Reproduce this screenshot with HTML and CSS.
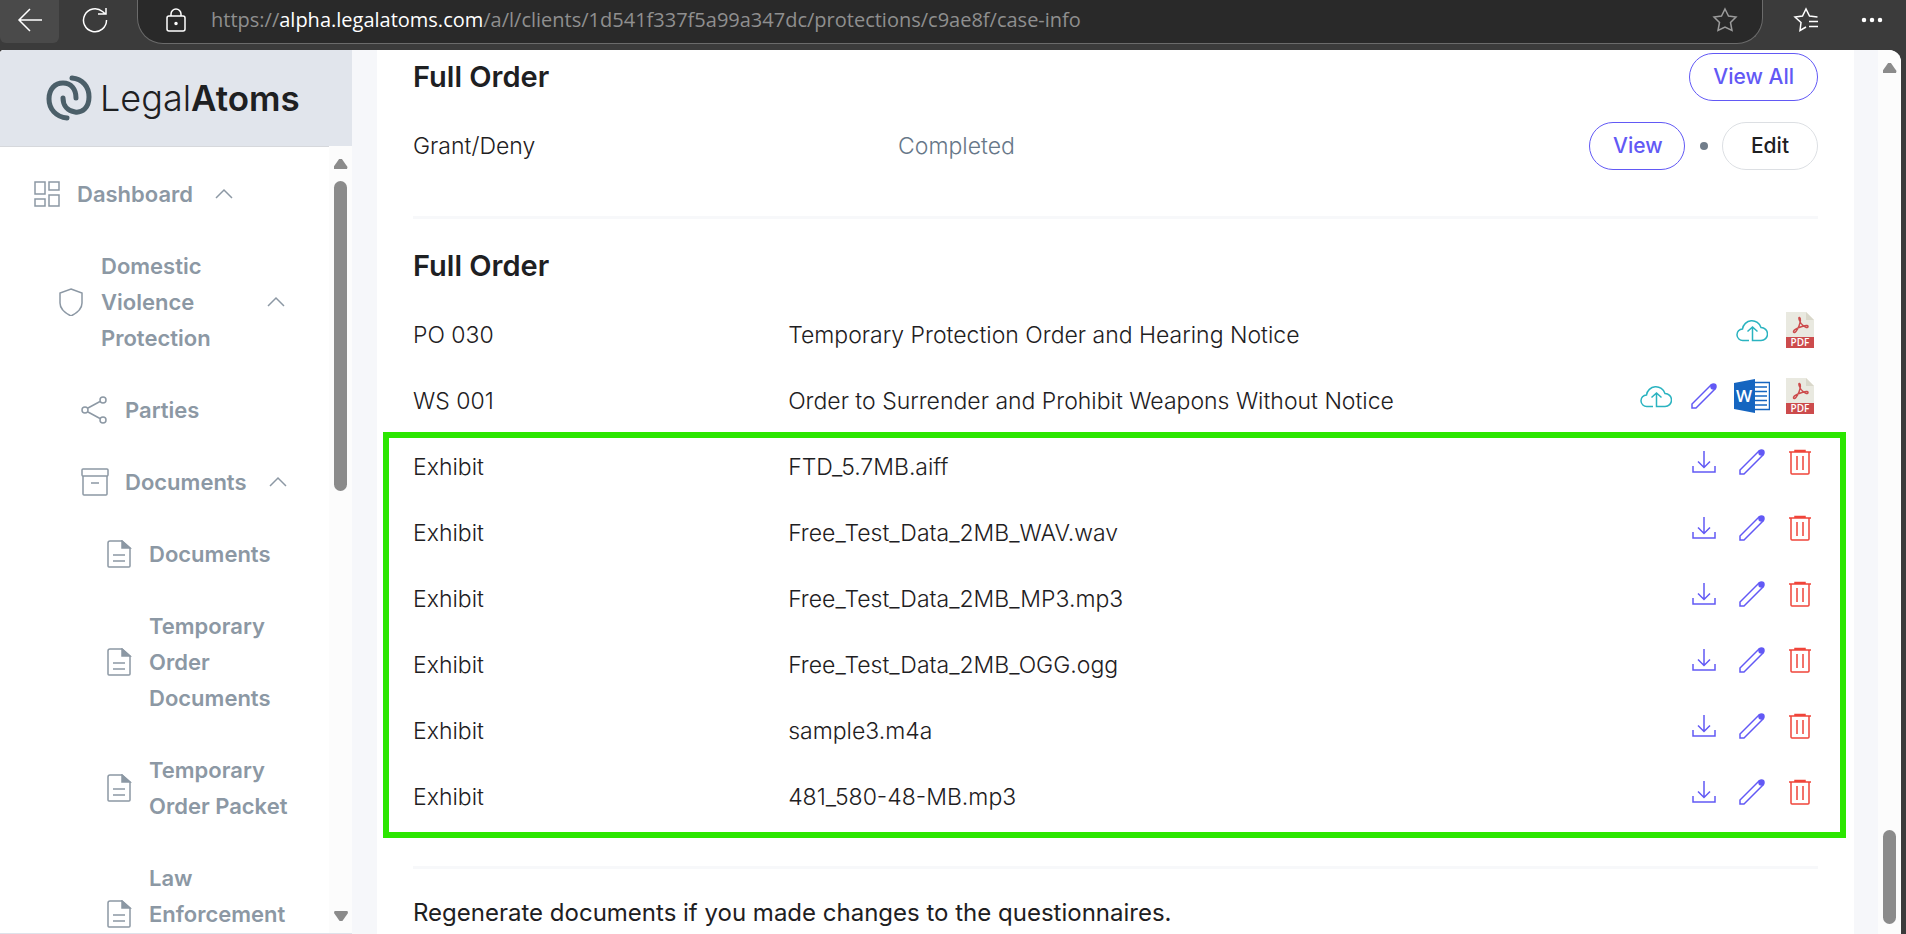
FILE: index.html
```html
<!DOCTYPE html>
<html lang="en">
<head>
  <meta charset="UTF-8" />
  <meta name="viewport" content="width=device-width, initial-scale=1" />
  <title>LegalAtoms - Case Info</title>
  <link rel="stylesheet" href="styles.css">
</head>
<body>
  <!-- icons -->
  <svg class="sprite" aria-hidden="true">
    <symbol id="i-chevron" viewBox="0 0 18 18"><path d="M1 13l8-8 8 8"/></symbol>
    <symbol id="i-file" viewBox="0 0 28 28"><path d="M17 1H5a2 2 0 0 0-2 2v23a1 1 0 0 0 1 1h20a1 1 0 0 0 1-1V8z"/><path class="fill" d="M17 1v7h8z"/><path d="M8 15h12M8 21h12"/></symbol>
    <symbol id="i-cloud" viewBox="0 0 32 32"><path d="M13 26.500H7a5.500 5.500 0 0 1-.5-11.500 9.500 9.500 0 0 1 18.500-1.500 6.500 6.500 0 0 1 0 13h-8.500V13.500M11.500 17.500l5-4.500 5 4.500"/></symbol>
    <symbol id="i-pencil" viewBox="0 0 28 28"><path d="M2 26v-4L21 3l4 4L6 26z"/><circle class="fill" cx="23.500" cy="4.500" r="2.500"/></symbol>
    <symbol id="i-download" viewBox="0 0 28 28"><path d="M14 3v16M8 13.500l6 6 6-6M3 18v6h22v-6"/></symbol>
    <symbol id="i-trash" viewBox="0 0 28 28"><path d="M3 4h22M9 4V2.500h10V4M5 4v21q0 1 1 1h16q1 0 1-1V4M11 8v14M17 8v14"/></symbol>
    <symbol id="i-pdf" viewBox="0 0 28 36">
      <path fill="#e9e9e0" d="M0 0h20l8 8v17H0z"/><path fill="#d9d7ca" d="M20 0v8h8z"/>
      <path fill="none" stroke="#cc4b4c" stroke-width="1.500" d="M7.500 20c1 2 4-2 5.500-6s2-8 .5-8.500 0 5 3 7.500 5.500 3.500 5.500 1.500-5.500-.5-9 1-6 3-5.500 4.500z"/>
      <path fill="#cc4b4c" d="M0 25h28v11H0z"/>
      <text x="14" y="34" text-anchor="middle" class="pdf-label">PDF</text>
    </symbol>
    <symbol id="i-word" viewBox="0 0 36 36">
      <path fill="#fff" stroke="#1565c0" d="M20 4.500h15.500v27H20z"/>
      <path stroke="#1565c0" stroke-width="1.500" d="M20 9h13M20 13.500h13M20 18h13M20 22.500h13M20 27h13"/>
      <path fill="#1565c0" d="M0 5l21-4v34L0 31z"/>
      <text x="10" y="24" text-anchor="middle" class="word-label">W</text>
    </symbol>
  </svg>

  <header class="browser">
    <button class="nav-btn active" aria-label="Back"><svg width="26" height="26" viewBox="0 0 26 26"><path d="M25 13H2M13 2 2 13l11 11"/></svg></button>
    <button class="nav-btn" aria-label="Reload"><svg width="26" height="26" viewBox="0 0 26 26"><path d="M24.500 13a11.500 11.500 0 1 1-4-8.500l3 2.500M24 1v6h-8"/></svg></button>
    <div class="address">
      <svg width="20" height="24" viewBox="0 0 20 24"><rect x="1" y="8" width="18" height="15" rx="2"/><path d="M5 8V6a5 5 0 0 1 10 0v2"/><circle class="fill" cx="10" cy="15.500" r="1"/></svg>
      <span class="url">https://<b>alpha.legalatoms.com</b>/a/l/clients/1d541f337f5a99a347dc/protections/c9ae8f/case-info</span>
      <svg class="star" width="26" height="26" viewBox="0 0 26 26"><path d="M13 2l3.500 7 7.500 1-5.500 5.500 1.500 8L13 20l-7 3.500 1.500-8L2 10l7.500-1z"/></svg>
    </div>
    <button class="tool-btn" aria-label="Favorites"><svg width="26" height="26" viewBox="0 0 26 26"><path d="M13 20l-6 3.500 1-8L2 10l7.500-1L13 2l3.500 7 8 1M16 14.500h9M16 19.500h9"/></svg></button>
    <button class="tool-btn" aria-label="Settings and more"><svg width="22" height="6" viewBox="0 0 22 6"><g class="fill"><circle cx="3" cy="3" r="1.500"/><circle cx="11" cy="3" r="1.500"/><circle cx="19" cy="3" r="1.500"/></g></svg></button>
  </header>

  <div class="page">
    <aside class="sidebar">
      <a class="logo" href="#">
        <svg width="46" height="46" viewBox="0 0 46 46"><path d="M26 3c10 1 17 8 17 19s-7 16-14 15-12-6-12-14"/><path d="M21 43C10 42 3 34 3 24S9 8 17 8s13 6 13 15"/></svg>
        <span>Legal<b>Atoms</b></span>
      </a>
      <div class="sidebar-body">
        <nav>
          <a class="item" href="#"><svg class="icon" viewBox="0 0 28 28"><path d="M2 2h10v12H2zM16 2h10v8H16zM2 19h10v7H2zM16 15h10v11H16z"/></svg><span>Dashboard</span><svg class="chevron"><use href="#i-chevron"/></svg></a>
          <a class="item l1" href="#"><svg class="icon" viewBox="0 0 28 28"><path d="M14 1l11 4v10c0 6-5 10-11 13C8 25 3 21 3 15V5z"/></svg><span>Domestic Violence Protection</span><svg class="chevron"><use href="#i-chevron"/></svg></a>
          <a class="item l2" href="#"><svg class="icon" viewBox="0 0 28 28"><circle cx="4" cy="14" r="3"/><circle cx="22" cy="4" r="3"/><circle cx="22" cy="24" r="3"/><path d="M7 12l12-6.500M7 16l12 6.500"/></svg><span>Parties</span></a>
          <a class="item l2" href="#"><svg class="icon" viewBox="0 0 28 28"><rect x="1" y="1" width="26" height="7" rx="1"/><path d="M2 8v18q0 1 1 1h22q1 0 1-1V8M10 15h8"/></svg><span>Documents</span><svg class="chevron"><use href="#i-chevron"/></svg></a>
          <a class="item l3" href="#"><svg class="icon"><use href="#i-file"/></svg><span>Documents</span></a>
          <a class="item l3" href="#"><svg class="icon"><use href="#i-file"/></svg><span>Temporary Order Documents</span></a>
          <a class="item l3" href="#"><svg class="icon"><use href="#i-file"/></svg><span>Temporary Order Packet</span></a>
          <a class="item l3" href="#"><svg class="icon"><use href="#i-file"/></svg><span>Law Enforcement Documents</span></a>
        </nav>
        <div class="scrollbar">
          <i class="up"></i><i class="thumb side-thumb"></i><i class="side-rest"></i><i class="down"></i>
        </div>
      </div>
    </aside>

    <main>
      <section class="card">
        <div class="row">
          <h2>Full Order</h2>
          <button class="btn primary">View All</button>
        </div>
        <div class="row status-row">
          <span>Grant/Deny</span>
          <span class="status">Completed</span>
          <button class="btn primary">View</button>
          <i class="dot"></i>
          <button class="btn">Edit</button>
        </div>
        <hr>
        <h2>Full Order</h2>
        <div class="files">
          <table>
            <tbody>
              <tr><td>PO 030</td><td>Temporary Protection Order and Hearing Notice</td><td><div class="actions">
                <button class="upload" aria-label="Upload"><svg><use href="#i-cloud"/></svg></button>
                <button class="doc" aria-label="PDF"><svg><use href="#i-pdf"/></svg></button></div></td></tr>
              <tr><td>WS 001</td><td>Order to Surrender and Prohibit Weapons Without Notice</td><td><div class="actions">
                <button class="upload" aria-label="Upload"><svg><use href="#i-cloud"/></svg></button>
                <button class="edit" aria-label="Edit"><svg><use href="#i-pencil"/></svg></button>
                <button class="doc" aria-label="Word"><svg><use href="#i-word"/></svg></button>
                <button class="doc" aria-label="PDF"><svg><use href="#i-pdf"/></svg></button></div></td></tr>
              <tr><td>Exhibit</td><td>FTD_5.7MB.aiff</td><td><div class="actions">
                <button class="edit" aria-label="Download"><svg><use href="#i-download"/></svg></button>
                <button class="edit" aria-label="Edit"><svg><use href="#i-pencil"/></svg></button>
                <button class="delete" aria-label="Delete"><svg><use href="#i-trash"/></svg></button></div></td></tr>
              <tr><td>Exhibit</td><td>Free_Test_Data_2MB_WAV.wav</td><td><div class="actions">
                <button class="edit" aria-label="Download"><svg><use href="#i-download"/></svg></button>
                <button class="edit" aria-label="Edit"><svg><use href="#i-pencil"/></svg></button>
                <button class="delete" aria-label="Delete"><svg><use href="#i-trash"/></svg></button></div></td></tr>
              <tr><td>Exhibit</td><td>Free_Test_Data_2MB_MP3.mp3</td><td><div class="actions">
                <button class="edit" aria-label="Download"><svg><use href="#i-download"/></svg></button>
                <button class="edit" aria-label="Edit"><svg><use href="#i-pencil"/></svg></button>
                <button class="delete" aria-label="Delete"><svg><use href="#i-trash"/></svg></button></div></td></tr>
              <tr><td>Exhibit</td><td>Free_Test_Data_2MB_OGG.ogg</td><td><div class="actions">
                <button class="edit" aria-label="Download"><svg><use href="#i-download"/></svg></button>
                <button class="edit" aria-label="Edit"><svg><use href="#i-pencil"/></svg></button>
                <button class="delete" aria-label="Delete"><svg><use href="#i-trash"/></svg></button></div></td></tr>
              <tr><td>Exhibit</td><td>sample3.m4a</td><td><div class="actions">
                <button class="edit" aria-label="Download"><svg><use href="#i-download"/></svg></button>
                <button class="edit" aria-label="Edit"><svg><use href="#i-pencil"/></svg></button>
                <button class="delete" aria-label="Delete"><svg><use href="#i-trash"/></svg></button></div></td></tr>
              <tr><td>Exhibit</td><td>481_580-48-MB.mp3</td><td><div class="actions">
                <button class="edit" aria-label="Download"><svg><use href="#i-download"/></svg></button>
                <button class="edit" aria-label="Edit"><svg><use href="#i-pencil"/></svg></button>
                <button class="delete" aria-label="Delete"><svg><use href="#i-trash"/></svg></button></div></td></tr>
            </tbody>
          </table>
          <div class="marker"></div>
        </div>
        <hr class="after-files">
        <p>Regenerate documents if you made changes to the questionnaires.</p>
      </section>
      <div class="scrollbar page-scroll">
        <i class="up"></i><i class="main-rest"></i><i class="thumb main-thumb"></i>
      </div>
    </main>
  </div>
</body>
</html>
```

FILE: styles.css
```css
* {
  box-sizing: border-box;
}
body {
  margin: 0;
  height: 100vh;
  overflow: hidden;
  display: flex;
  flex-direction: column;
  background: #3b3b3b;
  color: #1e2022;
  font: 24px/36px Inter, sans-serif;
}
a {
  color: inherit;
  text-decoration: none;
}
button {
  font: inherit;
  color: inherit;
  border: 0;
  background: none;
  padding: 0;
}
svg {
  display: block;
  flex: none;
  fill: none;
  stroke: currentColor;
  stroke-width: 1.5;
}
.fill {
  fill: currentColor;
}
.sprite {
  display: none;
}

/* browser bar */
.browser {
  flex: none;
  height: 50px;
  display: flex;
  align-items: flex-start;
  color: #fff;
}
.nav-btn {
  width: 59px;
  height: 43px;
  padding-bottom: 3px;
  display: flex;
  align-items: center;
  justify-content: center;
  border-radius: 0 0 6px 6px;
}
.nav-btn + .nav-btn {
  margin-left: 6px;
}
.nav-btn.active {
  background: #4a4a4a;
}
.address {
  flex: 1;
  height: 44px;
  margin-left: 13px;
  padding: 0 24px 4px 28px;
  display: flex;
  align-items: center;
  background: #292929;
  border: 1px solid #6b6b6b;
  border-top: 0;
  border-radius: 0 0 26px 26px;
}
.url {
  flex: 1;
  margin-left: 25px;
  font: 20px/30px "Open Sans", "Noto Sans", sans-serif;
  color: #8f8f8f;
}
.url b {
  font-weight: 400;
  color: #fff;
}
.star {
  color: #9b9b9b;
}
.tool-btn {
  width: 66px;
  height: 40px;
  display: flex;
  align-items: center;
  justify-content: center;
}
.tool-btn:nth-last-child(2) {
  margin-left: 10px;
}
.tool-btn:last-child {
  margin-right: 1px;
}

.page {
  flex: 1;
  min-height: 0;
  display: flex;
  margin-right: 5px;
  background: #f6f7fa;
  border-radius: 4px 12px 0 0;
  overflow: hidden;
}

/* sidebar */
.sidebar {
  width: 352px;
  flex: none;
  display: flex;
  flex-direction: column;
  background: #fff;
  border-bottom: 1px solid #dfe2ea;
}
.logo {
  flex: none;
  height: 96px;
  padding-left: 46px;
  display: flex;
  align-items: center;
  gap: 8px;
  background: #e1e5ec;
  font-size: 36px;
}
.logo svg {
  color: #4b5f69;
  stroke-width: 5;
  stroke-linecap: round;
}
.logo span {
  font-weight: 300;
}
.logo b {
  font-size: 35px;
  font-weight: 600;
}
.sidebar-body {
  flex: 1;
  min-height: 0;
  display: flex;
}
nav {
  flex: 1;
  padding-top: 11px;
  overflow: hidden;
  border-top: 1px solid #d6d8dc;
}
.item {
  display: flex;
  align-items: center;
  padding: 18px 0 18px 33px;
  color: #8c98a4;
  font-size: 22px;
  font-weight: 600;
}
.item.l1 { padding-left: 57px; }
.item.l2 { padding-left: 81px; }
.item.l3 { padding-left: 105px; }
.item span {
  max-width: 144px;
  margin-left: 16px;
}
.icon {
  width: 28px;
  height: 28px;
}
.chevron {
  width: 18px;
  height: 18px;
  margin-left: 22px;
}

/* scrollbars */
.scrollbar {
  flex: none;
  width: 23px;
  padding: 13px 0 12px;
  display: flex;
  flex-direction: column;
  align-items: center;
  background: #fcfcfc;
}
.thumb {
  width: 13px;
  margin-top: 12px;
  border-radius: 7px;
  background: #8b8b8b;
}
.side-thumb { flex: 310; }
.side-rest { flex: 419; }
.main-rest { flex: 745; }
.main-thumb { flex: 94; }
.up,
.down {
  flex: none;
  width: 14px;
  height: 10px;
  background: #8b8b8b;
  clip-path: polygon(40% 0, 60% 0, 100% 80%, 96% 100%, 4% 100%, 0 80%);
}
.down {
  transform: rotate(180deg);
}

/* content */
main {
  flex: 1;
  display: flex;
  margin-left: 25px;
}
.card {
  flex: 1;
  padding: 3px 36px 0;
  background: #fff;
}
.page-scroll {
  margin-left: 24px;
  padding-bottom: 10px;
}
h2 {
  margin: 0;
  font-size: 29px;
  font-weight: 600;
}
.row {
  display: flex;
  align-items: center;
  justify-content: space-between;
}
.status-row {
  margin-top: 21px;
  display: grid;
  grid-template-columns: 485fr 691fr 96px 37px 96px;
  font-size: 23px;
}
.status {
  color: #677788;
}
.btn {
  height: 48px;
  min-width: 96px;
  padding: 0 23px;
  border: 1px solid #dcdfe3;
  border-radius: 24px;
  font-size: 21px;
  font-weight: 500;
  color: #1e2022;
}
.btn.primary {
  border-color: #6259f5;
  color: #6259f5;
}
.dot {
  justify-self: center;
  width: 8px;
  height: 8px;
  border-radius: 50%;
  background: #717d8a;
}
hr {
  height: 3px;
  margin: 46px 0 29px;
  border: 0;
  background: #f7f8fa;
}
.files {
  position: relative;
  margin-top: 17px;
}
table {
  width: 100%;
  table-layout: fixed;
  border-collapse: collapse;
  font-size: 23px;
}
td {
  height: 66px;
  padding: 2px 0 0;
}
.status-row span,
td {
  font-weight: 300;
}
td:first-child { width: 26.7%; }
td:last-child { width: 15%; }
.actions {
  display: flex;
  justify-content: flex-end;
  gap: 12px;
  padding-bottom: 10px;
}
.actions button {
  width: 36px;
  height: 36px;
  display: flex;
  align-items: center;
  justify-content: center;
}
.actions svg {
  width: 28px;
  height: 28px;
}
.actions .upload svg {
  width: 32px;
  height: 32px;
}
.actions .doc svg {
  width: 36px;
  height: 36px;
  stroke: none;
}
.upload { color: #2ab3c0; }
.edit { color: #6259f5; }
.delete { color: #f0443a; }
.pdf-label {
  font: 600 10px "Open Sans", sans-serif;
  fill: #fff;
}
.word-label {
  font: 600 17px "Open Sans", sans-serif;
  fill: #fff;
}
/* frame around the exhibit rows */
.marker {
  position: absolute;
  top: 131px;
  right: -28px;
  bottom: -9px;
  left: -30px;
  border: 6px solid #2be600;
  pointer-events: none;
}
.after-files {
  margin: 37px 0 26px;
}
p {
  margin: 0;
}
```
